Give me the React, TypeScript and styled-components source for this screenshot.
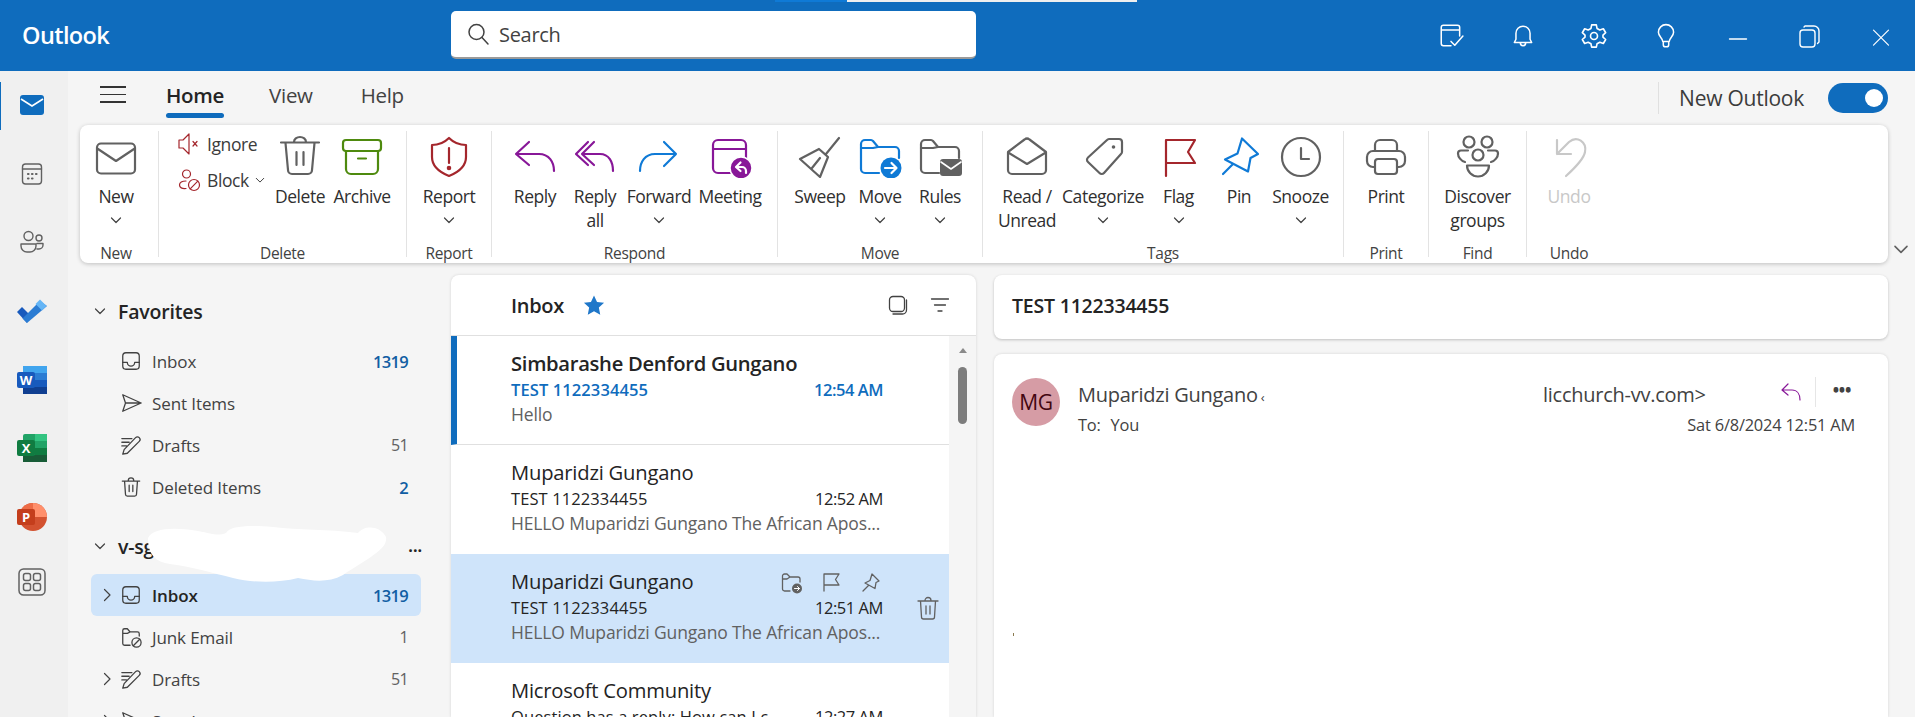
import React from "react";
import styled, { createGlobalStyle } from "styled-components";

const Global = createGlobalStyle`
  html, body { margin: 0; padding: 0; background: #f5f5f5; }
  body { font-family: "Open Sans", "Noto Sans", "Liberation Sans", sans-serif; color: #242424; overflow: hidden; }
  * { box-sizing: border-box; }
`;

const Page = styled.div`
  width: 1915px; height: 717px; display: flex; flex-direction: column; overflow: hidden; background: #f5f5f5; position: relative;
`;
const TopBar = styled.header`
  height: 71px; flex: none; background: #0f6cbd; display: flex; align-items: center; position: relative; padding-left: 22px;
`;
const TopStrip = styled.div`
  position: absolute; top: 0; left: 775px; width: 362px; height: 2px; display: flex;
`;
const StripPart = styled.span<{ $w: number; $c: string }>`
  width: ${p => p.$w}px; background: ${p => p.$c};
`;
const Logo = styled.div`
  width: 429px; flex: none; color: #fff; font-size: 23.5px; font-weight: 600; letter-spacing: -0.6px; margin-top: -2px;
`;
const SearchBox = styled.div`
  width: 525px; flex: none; height: 48px; margin-top: -1px; background: #fff; border-radius: 5px; border-bottom: 2px solid #9a9a9a; display: flex; align-items: center; gap: 9px; padding-left: 15px; font-size: 20px; color: #424242; letter-spacing: -0.3px;
`;
const TopIcons = styled.div`
  margin-left: 439px; flex: none; display: flex;
`;
const TopIcon = styled.div`
  width: 71.7px; flex: none; display: flex; justify-content: center; align-items: center;
`;
const Body = styled.div`
  flex: 1; min-height: 0; display: flex;
`;
const Rail = styled.nav`
  width: 68px; flex: none; background: #f0f0f0; display: flex; flex-direction: column; position: relative;
`;
const RailMark = styled.div`
  position: absolute; left: 0; top: 11px; width: 1px; height: 48px; background: #0f6cbd;
`;
const RailItem = styled.div`
  height: 68.6px; flex: none; display: flex; align-items: center; justify-content: center; padding-right: 5px;
  &:last-child { margin-top: -3px; }
`;
const Main = styled.main`
  flex: 1; min-width: 0; display: flex; flex-direction: column; padding-left: 12px;
`;
const TabRow = styled.div`
  height: 54px; flex: none; display: flex; align-items: flex-start; position: relative;
`;
const Burger = styled.div`
  width: 26px; margin: 15px 0 0 20px; display: flex; flex-direction: column; gap: 6px;
`;
const BurgerLine = styled.span`
  height: 1.5px; background: #333; display: block;
`;
const Tab = styled.div<{ $active?: boolean; $ml: number }>`
  margin-left: ${p => p.$ml}px; padding-top: 10px; height: 47px; font-size: 20.5px; font-weight: ${p => (p.$active ? 600 : 400)}; color: ${p => (p.$active ? "#242424" : "#424242")}; letter-spacing: -0.3px; position: relative;
  ${p => p.$active ? `&::after { content: ""; position: absolute; left: 0; right: 0; bottom: 0; height: 5px; border-radius: 3px; background: #0f6cbd; }` : ""}
`;
const NewOutlook = styled.div`
  margin-left: auto; margin-right: 27px; margin-top: 11px; height: 32px; display: flex; align-items: center; border-left: 1px solid #e0e0e0; padding-left: 20px; font-size: 21px; color: #3b3b3b; letter-spacing: -0.25px;
`;
const Toggle = styled.div`
  width: 60px; height: 30px; margin-left: 24px; border-radius: 15px; background: #0f6cbd; position: relative;
  &::after { content: ""; position: absolute; right: 5px; top: 6px; width: 18px; height: 18px; border-radius: 50%; background: #fff; }
`;
const Ribbon = styled.section`
  flex: none; width: 1808px; height: 138px; background: #fff; border-radius: 8px; box-shadow: 0 1px 4px rgba(0,0,0,.22); display: flex; padding-top: 6px; position: relative;
`;
const RibbonToggle = styled.div`
  position: absolute; left: 1813px; top: 116px;
`;
const Group = styled.div<{ $w: number; $pl?: number; $last?: boolean }>`
  width: ${p => p.$w}px; height: 126px; padding: 3px 0 0 ${p => p.$pl || 0}px; border-right: ${p => (p.$last ? "none" : "1px solid #e3e3e3")}; flex: none; position: relative;
`;
const GroupBody = styled.div`
  height: 109px; display: flex;
`;
const GroupName = styled.div<{ $shift?: number }>`
  position: absolute; left: 0; right: 0; top: 112px; text-align: center; font-size: 15.5px; line-height: 20px; color: #424242; letter-spacing: -0.3px; transform: translateX(${p => p.$shift || 0}px);
`;
const RButton = styled.div<{ $w: number; $off?: boolean }>`
  width: ${p => p.$w}px; flex: none; display: flex; flex-direction: column; align-items: center; font-size: 17.5px; line-height: 24px; color: ${p => (p.$off ? "#c8c8c8" : "#2f2f2f")}; text-align: center; letter-spacing: -0.45px; white-space: nowrap;
`;
const RIcon = styled.div`
  width: 44px; height: 44px; margin-bottom: 6px; flex: none;
`;
const Chev = styled.div`
  height: 24px; display: flex; align-items: center; justify-content: center;
`;
const SmallStack = styled.div`
  width: 92px; margin-top: -2px; display: flex; flex-direction: column; gap: 12px; flex: none;
`;
const SmallBtn = styled.div`
  height: 24px; display: flex; align-items: center; gap: 6px; font-size: 17.5px; letter-spacing: -0.4px; color: #3b3b3b; white-space: nowrap;
`;
const Content = styled.div`
  flex: 1; min-height: 0; display: flex; margin-top: 12px;
`;
const Folders = styled.aside`
  width: 371px; flex: none; padding: 15px 0 0 11px; display: flex; flex-direction: column; position: relative;
`;
const FolderHead = styled.div<{ $mb: number; $mt?: number }>`
  height: 42px; flex: none; display: flex; align-items: center; padding-left: 3px; margin: ${p => p.$mt || 0}px 0 ${p => p.$mb}px; font-size: 19.5px; font-weight: 600; color: #242424; letter-spacing: -0.2px;
`;
const HeadChev = styled.span`
  width: 24px; display: flex; margin-right: 0;
`;
const HeadDots = styled.span`
  margin-left: auto; margin-right: 29px; letter-spacing: 0; font-weight: 700; font-size: 16px;
`;
const FolderRow = styled.div<{ $sel?: boolean }>`
  height: 42px; flex: none; width: 330px; display: flex; align-items: center; padding-right: 13px; border-radius: 6px; background: ${p => (p.$sel ? "#cfe4fa" : "transparent")}; font-size: 17px; font-weight: ${p => (p.$sel ? 600 : 400)}; color: ${p => (p.$sel ? "#242424" : "#424242")}; letter-spacing: -0.1px;
`;
const FolderChev = styled.span`
  width: 29px; display: flex; justify-content: center; padding-left: 2px; flex: none;
`;
const FolderIcon = styled.span`
  width: 22px; height: 22px; margin-right: 10px; flex: none; display: flex;
`;
const Count = styled.span<{ $strong?: boolean }>`
  margin-left: auto; font-size: ${p => (p.$strong ? 16.5 : 16)}px; font-weight: ${p => (p.$strong ? 600 : 400)}; color: ${p => (p.$strong ? "#115ea3" : "#616161")}; letter-spacing: -0.7px;
`;
const Blob = styled.svg`
  position: absolute; left: 68px; top: 250px; z-index: 2;
`;
const ListCard = styled.section`
  width: 525px; flex: none; background: #fff; border-radius: 8px 8px 0 0; box-shadow: 0 0 3px rgba(0,0,0,.14); overflow: hidden; display: flex; flex-direction: column;
`;
const ListHead = styled.div`
  height: 61px; flex: none; border-bottom: 1px solid #e0e0e0; display: flex; align-items: center; padding-left: 60px; font-size: 20px; font-weight: 600; letter-spacing: -0.3px;
`;
const Star = styled.span`
  width: 22px; height: 22px; margin-left: 19px; display: flex;
`;
const ListTools = styled.div`
  margin-left: auto; margin-right: 26px; display: flex; gap: 22px;
`;
const ListBody = styled.div`
  flex: 1; min-height: 0; display: flex;
`;
const Rows = styled.div`
  width: 498px; flex: none;
`;
const Row = styled.article<{ $sel?: boolean; $unread?: boolean; $line?: boolean }>`
  height: 109px; padding: 15px 66px 0 ${p => (p.$unread ? 54 : 60)}px; background: ${p => (p.$sel ? "#cfe4fa" : "#fff")}; border-left: ${p => (p.$unread ? "6px solid #0f6cbd" : "none")}; border-bottom: ${p => (p.$line ? "1px solid #e0e0e0" : "none")}; position: relative;
`;
const Name = styled.div<{ $unread?: boolean }>`
  font-size: 20.2px; line-height: 27px; font-weight: ${p => (p.$unread ? 600 : 400)}; color: #242424; letter-spacing: ${p => (p.$unread ? "-0.3px" : "-0.2px")}; white-space: nowrap; margin-top: -1px;
`;
const SubjectLine = styled.div<{ $unread?: boolean }>`
  display: flex; justify-content: space-between; font-size: 16.5px; line-height: 24px; color: ${p => (p.$unread ? "#0f6cbd" : "#242424")}; font-weight: ${p => (p.$unread ? 600 : 400)}; letter-spacing: 0.1px; white-space: nowrap; margin-top: 1px;
`;
const TimeText = styled.span`
  letter-spacing: -0.45px;
`;
const Preview = styled.div`
  font-size: 17.5px; line-height: 25px; color: #616161; letter-spacing: -0.15px; white-space: nowrap;
`;
const RowTools = styled.div`
  position: absolute; top: 18px; left: 330px; display: flex; gap: 19px;
`;
const RowTrash = styled.div`
  position: absolute; top: 42px; left: 465px;
`;
const Scroll = styled.div`
  flex: 1; background: #f5f5f5; display: flex; flex-direction: column; align-items: center; padding-top: 12px;
`;
const ScrollUp = styled.div`
  width: 0; height: 0; border: 4.5px solid transparent; border-top: 0; border-bottom: 5px solid #8a8a8a;
`;
const ScrollThumb = styled.div`
  width: 9px; height: 57px; margin-top: 14px; border-radius: 5px; background: #7d7d7d;
`;
const Reading = styled.section`
  flex: 1; min-width: 0; margin: 0 27px 0 18px; display: flex; flex-direction: column; gap: 15px;
`;
const SubjectCard = styled.div`
  height: 64px; flex: none; background: #fff; border-radius: 8px; box-shadow: 0 1px 3px rgba(0,0,0,.22); display: flex; align-items: center; padding: 0 0 3px 18px; font-size: 19.5px; font-weight: 600; letter-spacing: -0.2px;
`;
const MailCard = styled.article`
  flex: 1; background: #fff; border-radius: 8px 8px 0 0; box-shadow: 0 0 3px rgba(0,0,0,.14); padding: 24px 33px 0 18px;
`;
const MailHead = styled.div`
  display: flex; gap: 18px;
`;
const Avatar = styled.div`
  width: 48px; height: 48px; flex: none; border-radius: 50%; background: #d69ca5; color: #420610; display: flex; align-items: center; justify-content: center; font-size: 21px; font-weight: 400; letter-spacing: -0.4px;
`;
const MailInfo = styled.div`
  flex: 1; min-width: 0;
`;
const MailFrom = styled.div`
  height: 32px; display: flex; align-items: center; font-size: 20px; color: #424242; letter-spacing: -0.25px; white-space: nowrap;
`;
const MailName = styled.span`
  width: 465px; flex: none;
`;
const MailAddr = styled.span`
  flex: none;
`;
const TinyMark = styled.span`
  font-size: 13px; margin-left: 3px;
`;
const MailActions = styled.div`
  margin-left: auto; display: flex; align-items: center; margin-right: -3px; height: 30px; margin-top: -4px;
`;
const ActionDivider = styled.span`
  width: 1px; height: 30px; background: #e6e6e6; margin: 0 17px 0 13px;
`;
const Dots = styled.span`
  font-size: 15px; font-weight: 800; letter-spacing: 0.2px; color: #424242; margin-top: -4px; width: 25px;
`;
const MailTo = styled.div`
  display: flex; justify-content: space-between; font-size: 16.4px; color: #424242; letter-spacing: -0.2px; line-height: 30px; margin-top: 0;
`;
const ToWord = styled.span`
  margin-left: 10px;
`;
const Speck = styled.div`
  width: 1px; height: 3px; background: #8a7a50; margin-top: 193px; margin-left: 1px;
`;

type SP = { c?: string; s?: number; w?: number; children: React.ReactNode; box?: number };
const Ic = ({ c = "#616161", s = 44, w = 2.2, box = 44, children }: SP) => (
  <svg width={s} height={s} viewBox={`0 0 ${box} ${box}`} fill="none" stroke={c} strokeWidth={w} strokeLinecap="round" strokeLinejoin="round" style={{ display: "block", flex: "none" }}>
    {children}
  </svg>
);
const ChevDown = ({ c = "#424242", s = 12 }: { c?: string; s?: number }) => (
  <svg width={s} height={s} viewBox="0 0 12 12" fill="none" stroke={c} strokeWidth="1.2" strokeLinecap="round" strokeLinejoin="round" style={{ display: "block" }}><path d="M1.5 4 L6 8.5 L10.5 4" /></svg>
);
const ChevRight = () => (
  <svg width="12" height="14" viewBox="0 0 12 14" fill="none" stroke="#424242" strokeWidth="1.2" strokeLinecap="round" strokeLinejoin="round" style={{ display: "block" }}><path d="M3.5 1.5 L9 7 L3.5 12.5" /></svg>
);

const PURPLE = "#881798", RED = "#a4262c", BLUE = "#0f7ad6", GREEN = "#4e8a0e";
const folderPath = "M21 39 H7 a4 4 0 0 1 -4 -4 V10 a4 4 0 0 1 4 -4 H13 a3 3 0 0 1 2 1 L20 13 H37 a4 4 0 0 1 4 4 V24";

const RI: Record<string, React.ReactNode> = {
  New: <Ic><rect x="3" y="9.5" width="38" height="30" rx="4" /><path d="M4 15 L22 27 L40 15" /></Ic>,
  Delete: <Ic><path d="M3 8.5 H41 M16 8 a6 5 0 0 1 12 0 M7.5 9 L10 36 a4 4 0 0 0 4 4 H30 a4 4 0 0 0 4 -4 L36.5 9 M18.5 18 V31 M25.5 18 V31" /></Ic>,
  Archive: <Ic c={GREEN}><rect x="3" y="6" width="38" height="11" rx="3" /><path d="M6 17 V35 a5 5 0 0 0 5 5 H33 a5 5 0 0 0 5 -5 V17 M18 24.5 H26" /></Ic>,
  Report: <Ic c={RED}><path d="M22 4 C27 9 32 11 39 11 V23 C39 32 32 38 22 42 C12 38 5 32 5 23 V11 C12 11 17 9 22 4 Z M22 14 V29" /><circle cx="22" cy="34" r="1.2" fill={RED} /></Ic>,
  Reply: <Ic c={PURPLE}><path d="M16 8 L3 20 L16 31 M3 20 H26 C36 20 41 28 41 37" /></Ic>,
  ReplyAll: <Ic c={PURPLE}><path d="M15 8 L3 20 L15 31 M21 8 L9 20 L21 31 M9 20 H27 C36 20 40 28 40 37" /></Ic>,
  Forward: <Ic c={BLUE}><path d="M27 8 L39 20 L27 32 M39 20 H18 C8 20 3 28 3 37" /></Ic>,
  Meeting: <Ic c={PURPLE}><rect x="5" y="6" width="33" height="33" rx="5" /><path d="M5 15 H38" /><circle cx="33" cy="34" r="11" fill={PURPLE} stroke="#fff" strokeWidth="1.5" /><path d="M32.5 28.5 L28 33 L32.5 37 M28.5 33 H34 a4 4 0 0 1 4 4 V39" stroke="#fff" /></Ic>,
  Sweep: <Ic><path d="M41 4 L28 20 M2 25 L21 15 L30 23 L22 43 Z M21 15 L28 21 M14 34 L22 24" /></Ic>,
  Move: <Ic c={BLUE}><path d={folderPath} /><path d="M3 14 H15 L20 13" /><circle cx="33" cy="34" r="10.5" fill={BLUE} stroke="none" /><path d="M27 34 H38 M33.5 29 L38.5 34 L33.5 39" stroke="#fff" /></Ic>,
  Rules: <Ic><path d={folderPath} /><path d="M3 14 H15 L20 13" /><rect x="22" y="25" width="22" height="17" rx="3" fill="#616161" stroke="none" /><path d="M23 28 L33 35 L43 28" stroke="#fff" strokeWidth="1.6" /></Ic>,
  Read: <Ic><path d="M3 18 L19.5 5.5 a4 4 0 0 1 5 0 L41 18 V36 a4 4 0 0 1 -4 4 H7 a4 4 0 0 1 -4 -4 Z M4 19 L22 30 L40 19" /></Ic>,
  Cat: <Ic><path d="M28 5 H38 a3 3 0 0 1 3 3 V18 a3 3 0 0 1 -1 2 L23 39 a3 3 0 0 1 -4.5 0 L7 28 a3 3 0 0 1 0 -4.5 L26 6 a3 3 0 0 1 2 -1 Z" /><circle cx="32.5" cy="13" r="1.8" fill="#616161" stroke="none" /></Ic>,
  Flag: <Ic c={RED}><path d="M9 42 V6 H38 L31 18 L38 29 H9" /></Ic>,
  Pin: <Ic c={BLUE}><path d="M25 4.5 L41 20 L33.5 24 L31 37.5 L8 25.5 L20.5 19.5 Z M16 30 L6 40" /></Ic>,
  Snooze: <Ic><circle cx="22" cy="23" r="19" /><path d="M22 14 V25 H30" /></Ic>,
  Print: <Ic><path d="M11 17 V11 a5 5 0 0 1 5 -5 H28 a5 5 0 0 1 5 5 V17 M11 33 H9 a6 6 0 0 1 -6 -6 V23 a6 6 0 0 1 6 -6 H35 a6 6 0 0 1 6 6 V27 a6 6 0 0 1 -6 6 H33" /><rect x="11" y="25" width="22" height="15" rx="3" /></Ic>,
  Discover: <Ic><circle cx="13" cy="8" r="5.5" /><circle cx="31" cy="8" r="5.5" /><circle cx="22" cy="21" r="5.5" /><path d="M11 31.5 H33 a11 11 0 0 1 -22 0 Z M12 16.5 H5 a3 3 0 0 0 -3 3 C2 23 5 27 9 28 M32 16.5 H39 a3 3 0 0 1 3 3 C42 23 39 27 35 28" /></Ic>,
  Undo: <Ic c="#c8c8c8"><path d="M10 6 V20 H24 M10 20 L22 8 C30 1 40 8 38 18 C37 24 30 32 19 42" /></Ic>,
};

const T = { box: 24, c: "#fff", w: 1.4 };
const topIcons = [
  <Ic {...T} s={26}><path d="M12 21 H5 a2 2 0 0 1 -2 -2 V4 a2 2 0 0 1 2 -2 H18 a2 2 0 0 1 2 2 V12 M3 6.5 H20 M12 17 L15.5 20.5 L23 12" /></Ic>,
  <Ic {...T} s={26}><path d="M4 18 L5.5 15 V9.5 a6.5 6.5 0 0 1 13 0 V15 L20 18 Z M9.5 18 a2.5 3 0 0 0 5 0" /></Ic>,
  <Ic {...T} s={28}><path d="M10 2.5 H14 L14.6 5.5 L17 6.8 L20 5.8 L22 9.2 L19.7 11.2 V13 L22 15 L20 18.4 L17 17.4 L14.6 18.7 L14 21.5 H10 L9.4 18.7 L7 17.4 L4 18.4 L2 15 L4.3 13 V11.2 L2 9.2 L4 5.8 L7 6.8 L9.4 5.5 Z" /><circle cx="12" cy="12" r="3" /></Ic>,
  <Ic {...T} s={26}><path d="M9 17 C9 14 5 12.5 5 8.5 a7 7 0 0 1 14 0 C19 12.5 15 14 15 17 Z M9.5 17 V20 a2 2 0 0 0 2 2 H12.5 a2 2 0 0 0 2 -2 V17" /></Ic>,
  <Ic {...T} s={24}><path d="M3.5 15 H20.5" /></Ic>,
  <Ic {...T} s={24}><rect x="3" y="6" width="15" height="17" rx="3" /><path d="M7 3 L8 2 H17 a5 5 0 0 1 5 5 V18 L20.5 19.5" /></Ic>,
  <Ic {...T} s={20}><path d="M3 5 L21 23 M21 5 L3 23" /></Ic>,
];

const F = { s: 22, box: 24, c: "#424242", w: 1.4 };
const FI = {
  inbox: <Ic {...F}><rect x="3" y="3" width="18" height="18" rx="3.5" /><path d="M3 13.5 H8 a4 4 0 0 0 8 0 H21" /></Ic>,
  sent: <Ic {...F}><path d="M3 3 L23 12 L3 21 L6 12 Z M6 12 H23" /></Ic>,
  drafts: <Ic {...F}><path d="M8 21 L3 22 L4.5 17 L17 4 a2.8 2.8 0 0 1 4 4 Z M2 5 H13 M2 9 H10 M2 13 H7" /></Ic>,
  trash: <Ic {...F}><path d="M2.5 5.5 H21.5 M9 5 a3 3 0 0 1 6 0 M5 6 L6 20 a2 2 0 0 0 2 2 H16 a2 2 0 0 0 2 -2 L19 6 M10 10 V17 M14 10 V17" /></Ic>,
  junk: <Ic {...F}><path d="M11 21 H5 a2 2 0 0 1 -2 -2 V5 a2 2 0 0 1 2 -2 H8 L11 6.5 H19 a2 2 0 0 1 2 2 V11 M3 8 H8 L11 6.5" /><circle cx="18" cy="18" r="5" /><path d="M14.5 21.5 L21.5 14.5" /></Ic>,
};

const Btn = ({ w, ic, off, children, chev }: { w: number; ic: string; off?: boolean; chev?: boolean; children: React.ReactNode }) => (
  <RButton $w={w} $off={off}>
    <RIcon>{RI[ic]}</RIcon>
    {children}
    {chev && <Chev><ChevDown /></Chev>}
  </RButton>
);

const Word = () => (
  <svg width="30" height="28" viewBox="0 0 30 28" style={{ display: "block" }}>
    <rect x="6" y="0" width="24" height="28" rx="2" fill="#2b7cd3" />
    <rect x="6" y="0" width="24" height="7" fill="#41a5ee" />
    <rect x="6" y="14" width="24" height="7" fill="#185abd" />
    <rect x="6" y="21" width="24" height="7" fill="#103f91" />
    <rect x="0" y="6" width="18" height="16" rx="2" fill="#185abd" />
    <text x="9" y="19" textAnchor="middle" fontSize="13" fontWeight="700" fill="#fff" fontFamily="Open Sans, sans-serif">W</text>
  </svg>
);
const Excel = () => (
  <svg width="30" height="28" viewBox="0 0 30 28" style={{ display: "block" }}>
    <rect x="6" y="0" width="24" height="28" rx="2" fill="#21a366" />
    <rect x="18" y="0" width="12" height="7" fill="#33c481" />
    <rect x="18" y="7" width="12" height="7" fill="#21a366" />
    <rect x="18" y="14" width="12" height="7" fill="#107c41" />
    <rect x="6" y="21" width="24" height="7" fill="#185c37" />
    <rect x="0" y="6" width="18" height="16" rx="2" fill="#107c41" />
    <text x="9" y="19" textAnchor="middle" fontSize="13" fontWeight="700" fill="#fff" fontFamily="Open Sans, sans-serif">X</text>
  </svg>
);
const Ppt = () => (
  <svg width="30" height="28" viewBox="0 0 30 28" style={{ display: "block" }}>
    <circle cx="16" cy="14" r="14" fill="#d35230" />
    <path d="M16 0 A14 14 0 0 1 30 14 H16 Z" fill="#ff8f6b" />
    <path d="M16 0 A14 14 0 0 0 2 14 H16 Z" fill="#ed6c47" />
    <rect x="0" y="6" width="18" height="16" rx="2" fill="#c43e1c" />
    <text x="9" y="19" textAnchor="middle" fontSize="13" fontWeight="700" fill="#fff" fontFamily="Open Sans, sans-serif">P</text>
  </svg>
);
const Todo = () => (
  <svg width="30" height="24" viewBox="0 0 30 24" style={{ display: "block" }}>
    <path d="M0 13 L5 8 L12 15 L10 24 Z" fill="#185abd" />
    <path d="M10 24 L5.5 19.5 L23 2 L30 7 Z" fill="#2b7cd3" />
    <path d="M23 0.5 L29.5 7 L25 11.5 L18.5 5 Z" fill="#64b5f6" />
  </svg>
);

const App = () => (
  <Page>
    <Global />
    <TopBar>
      <TopStrip><StripPart $w={72} $c="#0f7ad6" /><StripPart $w={290} $c="#efefef" /></TopStrip>
      <Logo>Outlook</Logo>
      <SearchBox>
        <Ic s={24} box={24} c="#424242" w={1.5}><circle cx="10.5" cy="10" r="7.5" /><path d="M16 15.5 L22 22" /></Ic>
        Search
      </SearchBox>
      <TopIcons>{topIcons.map((n, i) => <TopIcon key={i}>{n}</TopIcon>)}</TopIcons>
    </TopBar>
    <Body>
      <Rail>
        <RailMark />
        <RailItem>
          <svg width="24" height="20" viewBox="0 0 24 20" style={{ display: "block" }}>
            <rect width="24" height="20" rx="3" fill="#0f6cbd" />
            <path d="M1 4 L12 11 L23 4" fill="none" stroke="#fff" strokeWidth="1.6" />
          </svg>
        </RailItem>
        <RailItem>
          <Ic s={24} box={24} w={1.4}><rect x="2.5" y="2" width="19" height="20" rx="3" /><path d="M2.5 7 H21.5" /><path d="M8 12 H8.5 M12 12 H12.5 M16 12 H16.5 M8 16.5 H8.5 M12 16.5 H12.5" strokeWidth="2.2" /></Ic>
        </RailItem>
        <RailItem>
          <Ic s={26} box={26} w={1.4}><circle cx="9.5" cy="7" r="4.5" /><circle cx="20" cy="9" r="3" /><path d="M2 15 H17 V17 a6 6 0 0 1 -6 6 H8 a6 6 0 0 1 -6 -6 Z M18 14.5 H24 V16 a4 4 0 0 1 -4 4 H18" /></Ic>
        </RailItem>
        <RailItem><Todo /></RailItem>
        <RailItem><Word /></RailItem>
        <RailItem><Excel /></RailItem>
        <RailItem><Ppt /></RailItem>
        <RailItem>
          <Ic s={28} box={28} w={1.5}><rect x="1" y="1" width="26" height="26" rx="4.5" /><rect x="5.5" y="5.5" width="7" height="7" rx="2" /><rect x="15.5" y="5.5" width="7" height="7" rx="2" /><rect x="5.5" y="15.5" width="7" height="7" rx="2" /><rect x="15.5" y="15.5" width="7" height="7" rx="2" /></Ic>
        </RailItem>
      </Rail>
      <Main>
        <TabRow>
          <Burger><BurgerLine /><BurgerLine /><BurgerLine /></Burger>
          <Tab $active $ml={40}>Home</Tab>
          <Tab $ml={45}>View</Tab>
          <Tab $ml={48}>Help</Tab>
          <NewOutlook>New Outlook<Toggle /></NewOutlook>
        </TabRow>
        <Ribbon>
          <Group $w={79} $pl={6}>
            <GroupBody><Btn w={60} ic="New" chev>New</Btn></GroupBody>
            <GroupName $shift={-3}>New</GroupName>
          </Group>
          <Group $w={248} $pl={18}>
            <GroupBody>
              <SmallStack>
                <SmallBtn>
                  <Ic s={24} box={24} c={RED} w={1.2}><path d="M2 8 H6 L12 2 V22 L6 16 H2 Z M16 9.5 L20 14 M20 9.5 L16 14" /></Ic>
                  Ignore
                </SmallBtn>
                <SmallBtn>
                  <Ic s={24} box={24} c={RED} w={1.2}><circle cx="9.5" cy="6" r="4" /><path d="M9 13 C5 13 2.5 14.5 2.5 17 C2.5 19.5 5 21 9 20.5" /><circle cx="17" cy="17" r="5.5" /><path d="M13.2 20.8 L20.8 13.2" /></Ic>
                  Block<ChevDown s={10} />
                </SmallBtn>
              </SmallStack>
              <Btn w={62} ic="Delete">Delete</Btn>
              <Btn w={62} ic="Archive">Archive</Btn>
            </GroupBody>
            <GroupName>Delete</GroupName>
          </Group>
          <Group $w={85}>
            <GroupBody><Btn w={84} ic="Report" chev>Report</Btn></GroupBody>
            <GroupName>Report</GroupName>
          </Group>
          <Group $w={286} $pl={13}>
            <GroupBody>
              <Btn w={60} ic="Reply">Reply</Btn>
              <Btn w={60} ic="ReplyAll">Reply<br />all</Btn>
              <Btn w={68} ic="Forward" chev>Forward</Btn>
              <Btn w={74} ic="Meeting">Meeting</Btn>
            </GroupBody>
            <GroupName>Respond</GroupName>
          </Group>
          <Group $w={205} $pl={12}>
            <GroupBody>
              <Btn w={60} ic="Sweep">Sweep</Btn>
              <Btn w={60} ic="Move" chev>Move</Btn>
              <Btn w={60} ic="Rules" chev>Rules</Btn>
            </GroupBody>
            <GroupName>Move</GroupName>
          </Group>
          <Group $w={361} $pl={8}>
            <GroupBody>
              <Btn w={72} ic="Read">Read /<br />Unread</Btn>
              <Btn w={80} ic="Cat" chev>Categorize</Btn>
              <Btn w={71} ic="Flag" chev>Flag</Btn>
              <Btn w={50} ic="Pin">Pin</Btn>
              <Btn w={73} ic="Snooze" chev>Snooze</Btn>
            </GroupBody>
            <GroupName>Tags</GroupName>
          </Group>
          <Group $w={85}>
            <GroupBody><Btn w={84} ic="Print">Print</Btn></GroupBody>
            <GroupName>Print</GroupName>
          </Group>
          <Group $w={98}>
            <GroupBody><Btn w={97} ic="Discover">Discover<br />groups</Btn></GroupBody>
            <GroupName>Find</GroupName>
          </Group>
          <Group $w={84} $last>
            <GroupBody><Btn w={84} ic="Undo" off>Undo</Btn></GroupBody>
            <GroupName>Undo</GroupName>
          </Group>
          <RibbonToggle><ChevDown s={16} c="#616161" /></RibbonToggle>
        </Ribbon>
        <Content>
          <Folders>
            <FolderHead $mb={8}><HeadChev><ChevDown /></HeadChev>Favorites</FolderHead>
            <FolderRow><FolderChev />
              <FolderIcon>{FI.inbox}</FolderIcon>Inbox<Count $strong>1319</Count></FolderRow>
            <FolderRow><FolderChev /><FolderIcon>{FI.sent}</FolderIcon>Sent Items</FolderRow>
            <FolderRow><FolderChev /><FolderIcon>{FI.drafts}</FolderIcon>Drafts<Count>51</Count></FolderRow>
            <FolderRow><FolderChev /><FolderIcon>{FI.trash}</FolderIcon>Deleted Items<Count $strong>2</Count></FolderRow>
            <FolderHead $mt={17} $mb={7}><HeadChev><ChevDown /></HeadChev>v-sg<HeadDots>...</HeadDots></FolderHead>
            <Blob width="240" height="60" viewBox="0 0 240 60">
              <path fill="#fff" d="M0 13 C5 3 25 2 50 6 C65 9 70 11 78 8 C82 1 100 0 125 2 C150 5 180 4 210 8 C216 0 232 0 238 12 C240 24 222 32 195 50 C180 58 165 56 150 53 C130 58 105 58 85 53 C65 48 45 42 22 39 C8 37 0 30 0 13 Z" />
            </Blob>
            <FolderRow $sel><FolderChev><ChevRight /></FolderChev><FolderIcon>{FI.inbox}</FolderIcon>Inbox<Count $strong>1319</Count></FolderRow>
            <FolderRow><FolderChev /><FolderIcon>{FI.junk}</FolderIcon>Junk Email<Count>1</Count></FolderRow>
            <FolderRow><FolderChev><ChevRight /></FolderChev><FolderIcon>{FI.drafts}</FolderIcon>Drafts<Count>51</Count></FolderRow>
            <FolderRow><FolderChev><ChevRight /></FolderChev><FolderIcon>{FI.sent}</FolderIcon>Sent Items</FolderRow>
          </Folders>
          <ListCard>
            <ListHead>
              Inbox
              <Star>
                <svg width="22" height="22" viewBox="0 0 24 24" style={{ display: "block" }}><path fill="#1f77c9" d="M12 1.5 L15.3 8.6 L23 9.5 L17.3 14.8 L18.8 22.5 L12 18.7 L5.2 22.5 L6.7 14.8 L1 9.5 L8.7 8.6 Z" /></svg>
              </Star>
              <ListTools>
                <Ic s={20} box={20} c="#424242" w={1.3}><rect x="1.5" y="1.5" width="15" height="15" rx="3.5" /><path d="M18.5 5 V15 a4 4 0 0 1 -4 4 H5" /></Ic>
                <Ic s={20} box={20} c="#424242" w={1.3}><path d="M1.5 4 H18.5 M4.5 10 H15.5 M8 16 H12" /></Ic>
              </ListTools>
            </ListHead>
            <ListBody>
              <Rows>
                <Row $unread $line>
                  <Name $unread>Simbarashe Denford Gungano</Name>
                  <SubjectLine $unread><span>TEST 1122334455</span><TimeText>12:54 AM</TimeText></SubjectLine>
                  <Preview>Hello</Preview>
                </Row>
                <Row>
                  <Name>Muparidzi Gungano</Name>
                  <SubjectLine><span>TEST 1122334455</span><TimeText>12:52 AM</TimeText></SubjectLine>
                  <Preview>HELLO Muparidzi Gungano The African Apos...</Preview>
                </Row>
                <Row $sel>
                  <Name>Muparidzi Gungano</Name>
                  <SubjectLine><span>TEST 1122334455</span><TimeText>12:51 AM</TimeText></SubjectLine>
                  <Preview>HELLO Muparidzi Gungano The African Apos...</Preview>
                  <RowTools>
                    <Ic s={22} box={22} c="#616161" w={1.3}><path d="M9 19 H3.5 a2 2 0 0 1 -2 -2 V4 a2 2 0 0 1 2 -2 H6 L9 5 H17 a2 2 0 0 1 2 2 V10 M1.5 7 H6 L9 5" /><circle cx="16" cy="16.5" r="5" fill="#616161" stroke="none" /><path d="M13.5 16.5 H18.5 M16.5 14.5 L18.5 16.5 L16.5 18.5" stroke="#fff" strokeWidth="1" /></Ic>
                    <Ic s={20} box={20} c="#616161" w={1.3}><path d="M2 19 V2 H17 L13.5 7.5 L17 13 H2" /></Ic>
                    <Ic s={20} box={20} c="#616161" w={1.3}><path d="M11 2 L18 9 L15 10.5 L14 16.5 L4 11 L9 8.5 Z M7.5 13.5 L2 19" /></Ic>
                  </RowTools>
                  <RowTrash>
                    <Ic s={24} box={24} c="#616161" w={1.3}><path d="M2 5 H22 M9 4.5 a3 3 0 0 1 6 0 M4.5 5 L5.5 21 a2 2 0 0 0 2 2 H16.5 a2 2 0 0 0 2 -2 L19.5 5 M10 10 V18 M14 10 V18" /></Ic>
                  </RowTrash>
                </Row>
                <Row>
                  <Name>Microsoft Community</Name>
                  <SubjectLine><span>Question has a reply: How can I c...</span><TimeText>12:27 AM</TimeText></SubjectLine>
                </Row>
              </Rows>
              <Scroll><ScrollUp /><ScrollThumb /></Scroll>
            </ListBody>
          </ListCard>
          <Reading>
            <SubjectCard>TEST 1122334455</SubjectCard>
            <MailCard>
              <MailHead>
                <Avatar>MG</Avatar>
                <MailInfo>
                  <MailFrom>
                    <MailName>Muparidzi Gungano<TinyMark>‹</TinyMark></MailName>
                    <MailAddr>licchurch-vv.com&gt;</MailAddr>
                    <MailActions>
                      <Ic s={22} box={22} c={PURPLE} w={1.2}><path d="M8 3 L2 9 L8 14 M2 9 H12 C17 9 20 13 20 19" /></Ic>
                      <ActionDivider />
                      <Dots>•••</Dots>
                    </MailActions>
                  </MailFrom>
                  <MailTo>
                    <span>To:<ToWord>You</ToWord></span>
                    <span>Sat 6/8/2024 12:51 AM</span>
                  </MailTo>
                </MailInfo>
              </MailHead>
              <Speck />
            </MailCard>
          </Reading>
        </Content>
      </Main>
    </Body>
  </Page>
);

export default App;
